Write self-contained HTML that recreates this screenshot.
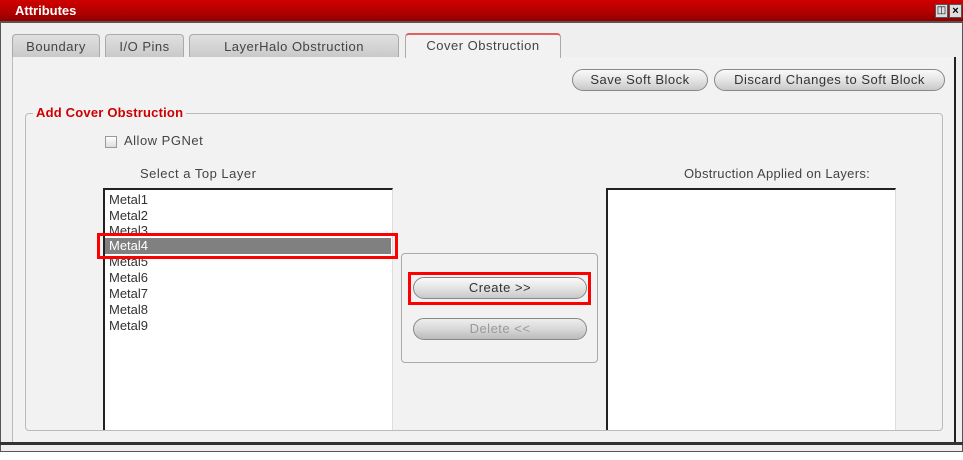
<!DOCTYPE html>
<html><head><style>
*{margin:0;padding:0;box-sizing:border-box}
body{width:963px;height:460px;background:#fff;position:relative;overflow:hidden;font-family:"Liberation Sans","DejaVu Sans",sans-serif;font-size:13px;color:#333;letter-spacing:0.5px}
.a{position:absolute}
.win{left:0;top:0;width:963px;height:452px;background:#efefef;border:1px solid #555}
.title{left:0;top:0;width:963px;height:23px;background:linear-gradient(#d00000,#b00000 60%,#900000);border-bottom:2px solid #555;color:#fff;font-weight:bold;font-size:13px;padding:3px 0 0 15px;letter-spacing:0}
.tab{top:34px;height:24px;background:linear-gradient(#e0e0e0,#c8c8c8);border:1px solid #aaa;border-bottom:none;border-radius:4px 4px 0 0;text-align:center;line-height:23px;color:#444}
.btn{height:22px;border:1px solid #888;border-radius:11px;background:linear-gradient(#fafafa,#e4e4e4 50%,#c8c8c8);text-align:center;line-height:20px;color:#333}
.list{background:#fff;border-top:2px solid #222;border-left:2px solid #222;border-right:1px solid #ddd}
.it{position:absolute;left:4px;font-size:13px;color:#333;line-height:16px;letter-spacing:0}
</style></head><body>
<div class="a win"></div>
<div class="a title">Attributes</div>
<div class="a" style="left:935px;top:4px;width:13px;height:14px;background:#ddd;border:1px solid #555;font-size:10px;line-height:12px;text-align:center;color:#000;letter-spacing:0">&#9707;</div>
<div class="a" style="left:949px;top:4px;width:13px;height:14px;background:#ddd;border:1px solid #555;font-size:11px;line-height:12px;text-align:center;color:#000;font-weight:bold;letter-spacing:0">×</div>
<div class="a tab" style="left:12px;width:88px">Boundary</div>
<div class="a tab" style="left:105px;width:79px">I/O Pins</div>
<div class="a tab" style="left:189px;width:210px">LayerHalo Obstruction</div>
<div class="a" style="left:12px;top:57px;width:944px;height:385px;background:#f2f2f2;border-right:2px solid #222;border-left:1px solid #bbb"></div>
<div class="a tab" style="left:405px;top:33px;width:156px;height:25px;background:#f2f2f2;border-top:2px solid #e06060;line-height:22px">Cover Obstruction</div>
<div class="a" style="left:0;top:442px;width:963px;height:3px;background:#333"></div>
<div class="a btn" style="left:572px;top:69px;width:136px">Save Soft Block</div>
<div class="a btn" style="left:714px;top:69px;width:231px">Discard Changes to Soft Block</div>
<div class="a" style="left:25px;top:113px;width:918px;height:318px;border:1px solid #bbb;border-radius:4px"></div>
<div class="a" style="left:33px;top:105px;background:#f2f2f2;color:#c00;font-weight:bold;padding:0 3px;letter-spacing:0.2px">Add Cover Obstruction</div>
<div class="a" style="left:105px;top:136px;width:12px;height:12px;border:1px solid #999;background:linear-gradient(#fff,#ddd)"></div>
<div class="a" style="left:124px;top:133px;color:#444">Allow PGNet</div>
<div class="a" style="left:140px;top:166px;color:#444">Select a Top Layer</div>
<div class="a" style="left:684px;top:166px;color:#444;letter-spacing:0.3px">Obstruction Applied on Layers:</div>
<div class="a list" style="left:103px;top:188px;width:290px;height:242px">
<div class="it" style="top:2px">Metal1</div>
<div class="it" style="top:18px">Metal2</div>
<div class="it" style="top:33px">Metal3</div>
<div class="a" style="left:0;top:48px;width:286px;height:16px;background:#808080"></div>
<div class="it" style="top:48px;color:#fff">Metal4</div>
<div class="it" style="top:64px">Metal5</div>
<div class="it" style="top:80px">Metal6</div>
<div class="it" style="top:96px">Metal7</div>
<div class="it" style="top:112px">Metal8</div>
<div class="it" style="top:128px">Metal9</div>
</div>
<div class="a" style="left:97px;top:233px;width:301px;height:26px;border:3px solid #f00"></div>
<div class="a list" style="left:606px;top:188px;width:290px;height:242px"></div>
<div class="a" style="left:401px;top:253px;width:197px;height:110px;border:1px solid #aaa;border-radius:4px"></div>
<div class="a btn" style="left:413px;top:277px;width:174px">Create &gt;&gt;</div>
<div class="a" style="left:408px;top:272px;width:183px;height:33px;border:3px solid #f00"></div>
<div class="a btn" style="left:413px;top:318px;width:174px;color:#999;background:linear-gradient(#eee,#d8d8d8 50%,#bbb)">Delete &lt;&lt;</div>
</body></html>
